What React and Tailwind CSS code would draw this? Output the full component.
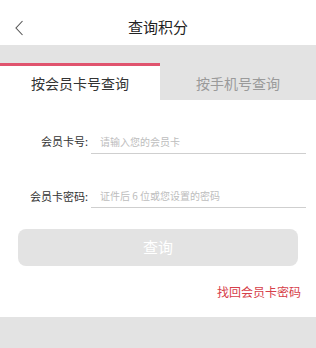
import React, { useState } from "react";

function App() {
  const [tab, setTab] = useState(0);
  const [card, setCard] = useState("");
  const [pwd, setPwd] = useState("");

  return (
    <div
      className="w-[316px] h-[348px] bg-white flex flex-col"
      style={{ fontFamily: '"Noto Sans CJK SC", "Noto Sans", sans-serif' }}
    >
      <header className="h-[45px] flex items-center relative shrink-0">
        <button className="absolute left-[12px] top-[20px] w-[14px] h-[16px] flex items-center justify-center">
          <svg width="10" height="16" viewBox="0 0 10 16" fill="none">
            <path d="M8.5 1 L2 8 L8.5 15" stroke="#555" strokeWidth="1.1" />
          </svg>
        </button>
        <h1 className="w-full text-center text-[15px] text-[#222] pt-[10px]">查询积分</h1>
      </header>

      <div className="h-[18px] bg-[#e3e3e3] shrink-0" />

      <div className="flex h-[37px] shrink-0">
        <button
          onClick={() => setTab(0)}
          className={`w-[160px] flex flex-col ${tab === 0 ? "bg-white" : "bg-[#e3e3e3]"}`}
        >
          <div className={`h-[3px] w-full ${tab === 0 ? "bg-[#e0546e]" : ""}`} />
          <span className={`flex-1 flex items-center justify-center text-[14px] ${tab === 0 ? "text-[#333]" : "text-[#9a9a9a]"}`}>
            按会员卡号查询
          </span>
        </button>
        <button
          onClick={() => setTab(1)}
          className={`flex-1 flex flex-col ${tab === 1 ? "bg-white" : "bg-[#e3e3e3]"}`}
        >
          <div className={`h-[3px] w-full ${tab === 1 ? "bg-[#e0546e]" : ""}`} />
          <span className={`flex-1 flex items-center justify-center text-[14px] ${tab === 1 ? "text-[#333]" : "text-[#9a9a9a]"}`}>
            按手机号查询
          </span>
        </button>
      </div>

      <div className="flex flex-col px-[18px] pt-[33px] gap-[34px]">
        <div className="flex items-end">
          <label className="w-[72px] text-right text-[11px] text-[#333] pb-[4px] pr-[2px]">会员卡号:</label>
          <input
            value={card}
            onChange={(e) => setCard(e.target.value)}
            placeholder="请输入您的会员卡"
            className="flex-1 ml-[1px] mr-[-8px] border-b border-[#cfcfcf] text-[10px] pl-[9px] pb-[4px] outline-none placeholder:text-[#bdbdbd]"
          />
        </div>
        <div className="flex items-end">
          <label className="w-[72px] text-right text-[11px] text-[#333] pb-[4px] pr-[2px]">会员卡密码:</label>
          <input
            value={pwd}
            onChange={(e) => setPwd(e.target.value)}
            type="password"
            placeholder="证件后 6 位或您设置的密码"
            className="flex-1 ml-[1px] mr-[-8px] border-b border-[#cfcfcf] text-[10px] pl-[9px] pb-[4px] outline-none placeholder:text-[#bdbdbd]"
          />
        </div>
      </div>

      <div className="px-[18px] pt-[21px]">
        <button className="w-full h-[37px] rounded-[8px] bg-[#e3e3e3] text-white text-[15px]">查询</button>
      </div>

      <div className="flex justify-end pr-[15px] pt-[17px]">
        <a className="text-[12px] text-[#d6404a]">找回会员卡密码</a>
      </div>

      <div className="flex-1 mt-[16px] bg-[#e3e3e3]" />
    </div>
  );
}

export default App;
